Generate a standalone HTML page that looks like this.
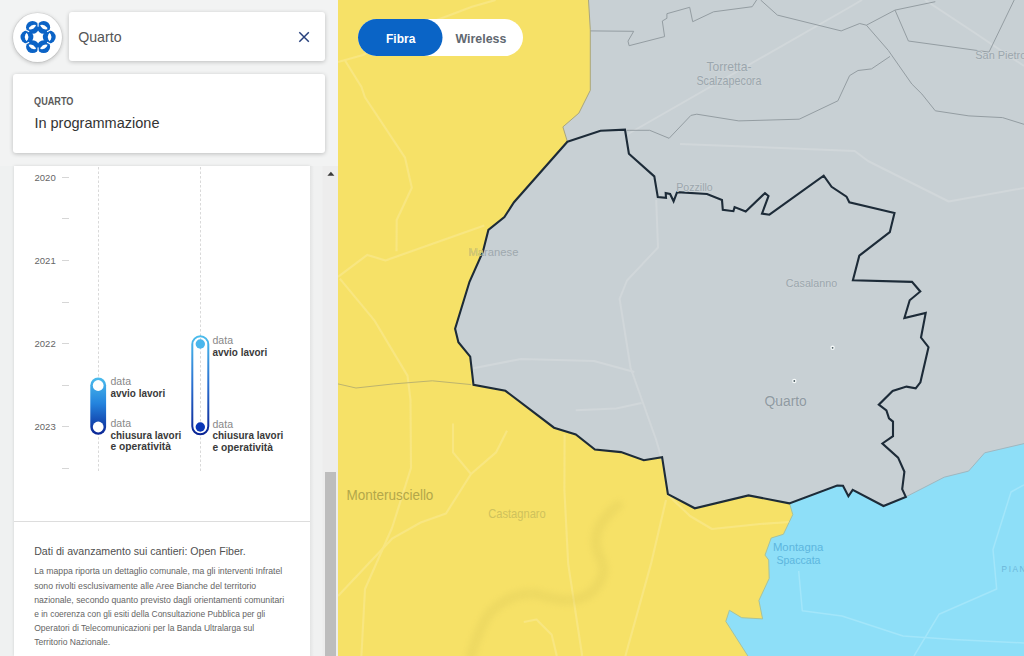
<!DOCTYPE html>
<html><head><meta charset="utf-8">
<style>
html,body{margin:0;padding:0;width:1024px;height:656px;overflow:hidden;background:#f1f3f3;font-family:"Liberation Sans",sans-serif;}
.abs{position:absolute;}
#side{left:0;top:0;width:338px;height:656px;background:#f2f3f3;}
#lower{left:0;top:166px;width:338px;height:490px;background:#eff1f1;}
#logo{left:13px;top:13px;width:49px;height:49px;border-radius:50%;background:#fff;box-shadow:0 0 0 0.6px rgba(0,0,0,.08),0 1px 4px rgba(0,0,0,.25);}
#search{left:69px;top:12px;width:256px;height:49px;background:#fff;border-radius:3px;box-shadow:0 1px 4px rgba(0,0,0,.22);}
#card{left:13px;top:74px;width:312px;height:79px;background:#fff;border-radius:3px;box-shadow:0 1px 4px rgba(0,0,0,.22);}
#panel{left:14px;top:166px;width:296px;height:490px;background:#fff;box-shadow:0 0 3px rgba(0,0,0,.13);}
#track{left:310px;top:166px;width:28px;height:490px;background:linear-gradient(to right,#e3e4e4 0px,#f0f1f1 4px,#f0f1f1 12px,#ededed 13px,#ededed 28px);}
#thumb{left:325px;top:472px;width:11px;height:184px;background:#bdbdbd;}
#map{left:338px;top:0;width:686px;height:656px;overflow:hidden;background:#c8d0d4;}
svg{position:absolute;left:0;top:0;}
</style></head><body>
<div id="side" class="abs">
  <div id="logo" class="abs"></div>
  <div id="lower" class="abs"></div>
  <div id="search" class="abs"></div>
  <div id="card" class="abs"></div>
  <div id="panel" class="abs"></div>
  <div id="track" class="abs"></div>
  <div id="thumb" class="abs"></div>

<svg width="338" height="656" viewBox="0 0 338 656" style="position:absolute;left:0;top:0">
  <defs>
    <linearGradient id="g1" x1="0" y1="0" x2="0" y2="1">
      <stop offset="0" stop-color="#4bbcec"/>
      <stop offset="0.45" stop-color="#2484de"/>
      <stop offset="1" stop-color="#0a2494"/>
    </linearGradient>
    <linearGradient id="g2" x1="0" y1="0" x2="0" y2="1">
      <stop offset="0" stop-color="#4bbcec"/>
      <stop offset="0.5" stop-color="#2a6fd0"/>
      <stop offset="1" stop-color="#0a2494"/>
    </linearGradient>
  </defs>
  <!-- logo -->
  <g><circle cx="49.25" cy="37.00" r="6.45" fill="#0b63c6"/><circle cx="43.68" cy="46.66" r="6.45" fill="#0b63c6"/><circle cx="32.53" cy="46.66" r="6.45" fill="#0b63c6"/><circle cx="26.95" cy="37.00" r="6.45" fill="#0b63c6"/><circle cx="32.52" cy="27.34" r="6.45" fill="#0b63c6"/><circle cx="43.68" cy="27.34" r="6.45" fill="#0b63c6"/><path fill="#fff" d="M51.50,37.00 L50.80,39.60 L49.60,41.30 L48.40,39.60 L47.70,37.00 L48.40,34.40 L49.60,32.70 L50.80,34.40Z"/><path fill="#fff" d="M44.80,48.60 L42.20,49.30 L40.13,49.11 L41.00,47.22 L42.90,45.31 L45.50,44.62 L47.57,44.81 L46.70,46.70Z"/><path fill="#fff" d="M31.40,48.60 L29.50,46.70 L28.63,44.81 L30.70,44.62 L33.30,45.31 L35.20,47.22 L36.07,49.11 L34.00,49.30Z"/><path fill="#fff" d="M24.70,37.00 L25.40,34.40 L26.60,32.70 L27.80,34.40 L28.50,37.00 L27.80,39.60 L26.60,41.30 L25.40,39.60Z"/><path fill="#fff" d="M31.40,25.40 L34.00,24.70 L36.07,24.89 L35.20,26.78 L33.30,28.69 L30.70,29.38 L28.63,29.19 L29.50,27.30Z"/><path fill="#fff" d="M44.80,25.40 L46.70,27.30 L47.57,29.19 L45.50,29.38 L42.90,28.69 L41.00,26.78 L40.13,24.89 L42.20,24.70Z"/><path d="M47.45,42.40 L49.53,43.60" stroke="#fff" stroke-width="1.1" stroke-linecap="round"/><path d="M38.10,47.80 L38.10,50.20" stroke="#fff" stroke-width="1.1" stroke-linecap="round"/><path d="M28.75,42.40 L26.67,43.60" stroke="#fff" stroke-width="1.1" stroke-linecap="round"/><path d="M28.75,31.60 L26.67,30.40" stroke="#fff" stroke-width="1.1" stroke-linecap="round"/><path d="M38.10,26.20 L38.10,23.80" stroke="#fff" stroke-width="1.1" stroke-linecap="round"/><path d="M47.45,31.60 L49.53,30.40" stroke="#fff" stroke-width="1.1" stroke-linecap="round"/></g>
  <!-- close X -->
  <path d="M299.3,32.3 L308.8,41.8 M308.8,32.3 L299.3,41.8" stroke="#27407c" stroke-width="1.5" fill="none"/>
  <g font-family="Liberation Sans" >
    <text x="78.2" y="42" font-size="14.8" fill="#555" textLength="43.4" lengthAdjust="spacingAndGlyphs">Quarto</text>
    <text x="34.1" y="105" font-size="11.5" font-weight="700" fill="#5a5a5a" textLength="39.3" lengthAdjust="spacingAndGlyphs">QUARTO</text>
    <text x="34.4" y="127.5" font-size="14.6" fill="#333" textLength="125.1" lengthAdjust="spacingAndGlyphs">In programmazione</text>
  </g>
  <!-- ticks -->
  <g stroke="#d6d6d6" stroke-width="1">
    <path d="M62,177.5 H69 M62,218.5 H69 M62,260.5 H69 M62,302.5 H69 M62,343.5 H69 M62,385.5 H69 M62,426.5 H69 M62,468.5 H69"/>
  </g>
  <g stroke="#d9d9d9" stroke-width="1" stroke-dasharray="2.5,2">
    <path d="M98.5,167 V471 M200.5,167 V471"/>
  </g>
  <g font-family="Liberation Sans" font-size="9" fill="#666">
    <text x="34.5" y="180.8" textLength="21.2" lengthAdjust="spacingAndGlyphs">2020</text>
    <text x="34.5" y="264" textLength="21.2" lengthAdjust="spacingAndGlyphs">2021</text>
    <text x="34.5" y="347.2" textLength="21.2" lengthAdjust="spacingAndGlyphs">2022</text>
    <text x="34.5" y="430.4" textLength="21.2" lengthAdjust="spacingAndGlyphs">2023</text>
  </g>
  <!-- pill 1 -->
  <rect x="90.3" y="377.4" width="15.8" height="57.4" rx="7.9" fill="url(#g1)"/>
  <circle cx="98.2" cy="385.5" r="5.4" fill="#fff"/>
  <circle cx="98.2" cy="427" r="5.4" fill="#fff"/>
  <!-- pill 2 -->
  <rect x="192.3" y="336.3" width="16" height="98" rx="8" fill="none" stroke="url(#g2)" stroke-width="2"/>
  <circle cx="200.3" cy="344" r="4.7" fill="#49b6ec"/>
  <circle cx="200.3" cy="427" r="4.7" fill="#0a36b6"/>
  <g font-family="Liberation Sans" font-size="10.3">
    <text x="110.5" y="385.3" fill="#888" textLength="20.5" lengthAdjust="spacingAndGlyphs">data</text>
    <text x="110.5" y="397" fill="#3a3a3a" font-weight="700" textLength="54.7" lengthAdjust="spacingAndGlyphs">avvio lavori</text>
    <text x="110.5" y="427.3" fill="#888" textLength="20.5" lengthAdjust="spacingAndGlyphs">data</text>
    <text x="110.5" y="439.3" fill="#3a3a3a" font-weight="700" textLength="70.8" lengthAdjust="spacingAndGlyphs">chiusura lavori</text>
    <text x="110.5" y="450.4" fill="#3a3a3a" font-weight="700" textLength="60.4" lengthAdjust="spacingAndGlyphs">e operatività</text>
    <text x="212.5" y="344" fill="#888" textLength="20.5" lengthAdjust="spacingAndGlyphs">data</text>
    <text x="212.5" y="355.5" fill="#3a3a3a" font-weight="700" textLength="54.7" lengthAdjust="spacingAndGlyphs">avvio lavori</text>
    <text x="212.5" y="428" fill="#888" textLength="20.5" lengthAdjust="spacingAndGlyphs">data</text>
    <text x="212.5" y="439.3" fill="#3a3a3a" font-weight="700" textLength="70.8" lengthAdjust="spacingAndGlyphs">chiusura lavori</text>
    <text x="212.5" y="450.6" fill="#3a3a3a" font-weight="700" textLength="60.4" lengthAdjust="spacingAndGlyphs">e operatività</text>
  </g>
  <line x1="14" y1="521.5" x2="310" y2="521.5" stroke="#dddddd" stroke-width="1"/>
  <g font-family="Liberation Sans">
    <text x="34.2" y="555.3" font-size="11" fill="#505050" textLength="211.5" lengthAdjust="spacingAndGlyphs">Dati di avanzamento sui cantieri: Open Fiber.</text>
    <g font-size="8.8" fill="#646464">
    <text x="34.2" y="574.3" textLength="248" lengthAdjust="spacingAndGlyphs">La mappa riporta un dettaglio comunale, ma gli interventi Infratel</text>
    <text x="34.2" y="588.5" textLength="222" lengthAdjust="spacingAndGlyphs">sono rivolti esclusivamente alle Aree Bianche del territorio</text>
    <text x="34.2" y="602.7" textLength="250" lengthAdjust="spacingAndGlyphs">nazionale, secondo quanto previsto dagli orientamenti comunitari</text>
    <text x="34.2" y="617.1" textLength="231" lengthAdjust="spacingAndGlyphs">e in coerenza con gli esiti della Consultazione Pubblica per gli</text>
    <text x="34.2" y="631" textLength="220" lengthAdjust="spacingAndGlyphs">Operatori di Telecomunicazioni per la Banda Ultralarga sul</text>
    <text x="34.2" y="645.3" textLength="76" lengthAdjust="spacingAndGlyphs">Territorio Nazionale.</text>
    </g>
  </g>
  <!-- scroll arrow -->
  <path d="M327.4,175.8 L334.4,175.8 L330.9,171.8 Z" fill="#3a3a3a"/>
</svg>
</div>
<div id="map" class="abs">
<svg width="686" height="656" viewBox="338 0 686 656">
  <defs><clipPath id="yclip"><path d="M338,0 L588.5,0 L590.3,29.7 L590.3,90.3 L578.9,113.1 L562.9,126.9 L567.4,141.7 L514,202.2 L504.4,217.1 L488.4,229.9 L482.9,251.7 L469.5,281.8 L455.1,328.8 L458.4,342.2 L470.2,356.6 L473.5,384.8 L505.4,390.8 L554,427.7 L575.8,434.4 L594.9,449.5 L621,452.1 L643.8,460.2 L662.1,457.2 L667.9,494.1 L694.8,508.3 L748.5,495.4 L789.5,503.2 L792.8,514.6 L783.4,534.3 L771.2,538 L765,555.1 L768.7,560 L769.2,578.4 L758.9,600.5 L762.6,618.9 L741.7,617.7 L729.4,610.3 L725.8,621.4 L747.9,656 L338,656 Z"/></clipPath><filter id="blur3" x="-20%" y="-20%" width="140%" height="140%"><feGaussianBlur stdDeviation="3"/></filter></defs>
  <rect x="338" y="0" width="686" height="656" fill="#c8d0d4"/>
  <!-- yellow -->
  <path fill="#f6e167" d="M338,0 L588.5,0 L590.3,29.7 L590.3,90.3 L578.9,113.1 L562.9,126.9 L567.4,141.7 L514,202.2 L504.4,217.1 L488.4,229.9 L482.9,251.7 L469.5,281.8 L455.1,328.8 L458.4,342.2 L470.2,356.6 L473.5,384.8 L505.4,390.8 L554,427.7 L575.8,434.4 L594.9,449.5 L621,452.1 L643.8,460.2 L662.1,457.2 L667.9,494.1 L694.8,508.3 L748.5,495.4 L789.5,503.2 L792.8,514.6 L783.4,534.3 L771.2,538 L765,555.1 L768.7,560 L769.2,578.4 L758.9,600.5 L762.6,618.9 L741.7,617.7 L729.4,610.3 L725.8,621.4 L747.9,656 L338,656 Z"/>
  <!-- blue -->
  <path fill="#8edff8" d="M789.5,503.2 L837.2,485.5 L843,485.8 L848.4,496.3 L852.7,489.8 L883.5,506 L905.8,496.9 L944.2,477.2 L968.6,471.1 L984.7,452.8 L1024,443.6 L1024,656 L747.9,656 L725.8,621.4 L729.4,610.3 L741.7,617.7 L762.6,618.9 L758.9,600.5 L769.2,578.4 L768.7,560 L765,555.1 L771.2,538 L783.4,534.3 L792.8,514.6 Z"/>

  <!-- roads yellow -->
  <g fill="none" stroke="#f9e98c" stroke-width="2.1" stroke-linejoin="round" opacity="0.7">
    <path d="M338,62 L363,55 L405,32 L472,6.7 L495.6,0"/>
    <path d="M344.7,60 L361.5,87 L364.8,97 L405,157.6 L411.8,187.8 L396.7,220 L396.5,251.2"/>
    <path d="M338,276.8 L367.3,254.9 L385.5,260.4 L484.3,225.6"/>
    <path d="M339.8,278.6 L374.6,320.7 L407.5,375.6 L410.5,400 L411,468 L392,528 L365,589 L361.4,656"/>
    <path d="M453,423.6 L453,452.4 L471,474 L496,452.4 L507,430.8"/>
    <path d="M471,474 L446,513.5 L420.7,522.5 L392,538.7 L338,596"/>
    <path d="M564.6,434.4 L564.4,490 L568.2,563.9 L582.2,656"/>
    <path d="M666,500 L651,563.9 L625.4,656"/>
    <path d="M667,494 L690,516 L712,529 L760,524 L790,522"/>
    <path d="M523.8,622 L536.5,619.5 L551.7,634.7 L556.8,656"/>
      </g>
  <!-- terrain shade -->
  <g fill="none" stroke="#dcc958" stroke-linecap="round" stroke-linejoin="round" opacity="0.32" filter="url(#blur3)">
    <path d="M617.8,505.2 C600,520 592,535 597.4,551 C600,560 612,570 592.4,591.6 C580,602 565,603 536.5,594.1 C520,592 505,598 490.8,611.9 C482,622 476,640 470.5,656" stroke-width="10"/>
  </g>
  <!-- roads gray -->
  <g fill="none" stroke="#d1d7da" stroke-width="2" stroke-linejoin="round">
    <path d="M656.2,200 L658,247.5 L627,280.5 L619.6,298.8 L630.6,368 L656.2,440 L662,460"/>
    <path d="M473.3,368.2 L521,359 L594,361 L634.3,372"/>
    <path d="M575.7,410.3 L616,408.5 L641.6,403"/>
    <path d="M628,134 L850,7 L862,0"/>
    <path d="M925,0 L975,33 L1024,66"/>
    <path d="M680,144 L854.7,151 L868,161 L948.7,201.5 L1024,188"/>
      </g>
  <!-- roads blue -->
  <g fill="none" stroke="#a3e6fa" stroke-width="1.5" stroke-linejoin="round">
    <path d="M798.7,571 L802.3,610.7 L842,616 L903,636 L953.5,639.5 L1024,643"/>
    <path d="M914,656 L939,614.3 L996.7,589 L993,549.5 L1011,492 L1024,484.8"/>
  </g>
  <!-- thin boundaries -->
  <g fill="none" stroke="#949da2" stroke-width="1">
    <path d="M590.3,30.9 L633.7,31.3 L628,41.1 L629.1,45.7 L664.6,36.6 L662.3,21 L666.9,18.3 L666.9,13.7 L689.7,7.3 L692.7,21.7 L713.6,11.8 L752.2,6.7 L756.6,0"/>
    <path d="M760.6,0 L777.4,15.1 L841.2,30.9 L859.7,23.5 L866.4,25.2 L895,10.1 L935.3,1.7"/>
    <path d="M866.4,25.2 L888.3,50.4 L911.8,84 L921.9,94 L935.3,110.8 L968.9,115.9 L1002.5,117.6 L1024,124.3"/>
    <path d="M895,10.1 L908.4,41 L989,52.1 L1014.2,0"/>
    <path d="M890,56.4 L871.5,68.9 L858,70.5 L849.6,75.6 L837.9,100.8 L799.2,119.2 L738.8,120.9 L696.8,114.2 L690.9,115.4 L669.1,138.3 L649.7,130.3 L626.9,130.3"/>
  </g>
  <path d="M338,383.9 L356,388 L393.5,383.9 L432.3,380.8 L471.2,384.6" fill="none" stroke="#bdb46e" stroke-width="1"/>
  <g fill="none" stroke-width="1" stroke-linejoin="round">
    <path stroke="#a9a67e" d="M588.5,0 L590.3,29.7 L590.3,90.3 L578.9,113.1 L562.9,126.9 L567.4,141.7"/>
    <path stroke="#9fb7c0" d="M905.8,496.9 L944.2,477.2 L968.6,471.1 L984.7,452.8 L1024,443.6"/>
    <path stroke="#a8c39a" d="M789.5,503.2 L792.8,514.6 L783.4,534.3 L771.2,538 L765,555.1 L768.7,560 L769.2,578.4 L758.9,600.5 L762.6,618.9 L741.7,617.7 L729.4,610.3 L725.8,621.4 L747.9,656"/>
  </g>
  <!-- Quarto boundary -->
  <path fill="none" stroke="#1d2b38" stroke-width="2.1" stroke-linejoin="miter" d="M567.4,141.7 L600.5,130.7 L625,129.6 L628.9,153.7 L654.3,176.4 L657.8,197.1 L666,197.8 L665.7,193.1 L670.1,194 L673.6,201.3 L677.1,192.2 L707,194 L722,200.1 L722.8,209.8 L733.4,211.2 L734.6,207.1 L745.7,211.5 L765,193.1 L768.5,196 L762,213.6 L769.4,214.7 L823.7,175.7 L831.6,186.8 L846.5,196.6 L849.3,202.3 L894.5,213 L889.8,232.2 L859.3,255.7 L852.9,280.2 L912,281.9 L920.3,291.5 L909.7,300.3 L904.4,318 L925.7,313 L921,337.6 L928.5,347.2 L920.4,382.3 L915.7,388.3 L906.5,386.6 L892.6,390.9 L878.8,404.7 L886.4,410.4 L889,418.3 L893,421.6 L893,436.2 L882.4,443.5 L898.1,457.6 L904.4,471.7 L902.2,489.2 L905.8,496.9 L883.5,506 L852.7,489.8 L848.4,496.3 L843,485.8 L837.2,485.5 L789.3,503.4 L748.5,495.4 L694.8,508.3 L667.9,494.1 L662.1,457.2 L643.8,460.2 L621,452.1 L594.9,449.5 L575.8,434.4 L554,427.7 L505.4,390.8 L473.5,384.8 L470.2,356.6 L458.4,342.2 L455.1,328.8 L469.5,281.8 L482.9,251.7 L488.4,229.9 L504.4,217.1 L514,202.2 Z"/>

  <!-- dots -->
  <g><circle cx="832.6" cy="347.8" r="2.2" fill="#f4f8f8"/><circle cx="832.6" cy="347.8" r="0.9" fill="#4a5a60"/>
  <circle cx="794.3" cy="381" r="2.2" fill="#f4f8f8"/><circle cx="794.3" cy="381" r="0.9" fill="#4a5a60"/>
  <circle cx="776" cy="401.5" r="2.2" fill="#f4f8f8"/><circle cx="776" cy="401.5" r="0.9" fill="#4a5a60"/></g>
  <!-- labels -->
  <g font-family="Liberation Sans" lengthAdjust="spacingAndGlyphs">
    <g fill="#9ba6ad" stroke="#cdd4d7" stroke-width="1.5" paint-order="stroke">
      <text x="706.4" y="71.1" font-size="12.2" textLength="45.1" lengthAdjust="spacingAndGlyphs">Torretta-</text>
      <text x="696.4" y="84.6" font-size="12.2" textLength="65" lengthAdjust="spacingAndGlyphs">Scalzapecora</text>
      <text x="975.3" y="59.1" font-size="10" textLength="51" lengthAdjust="spacingAndGlyphs">San Pietro</text>
      <text x="676.2" y="191" font-size="11.5" textLength="36.6" lengthAdjust="spacingAndGlyphs">Pozzillo</text>
      <text x="785.8" y="286.7" font-size="11.8" textLength="51.3" lengthAdjust="spacingAndGlyphs">Casalanno</text>
      <text x="764.6" y="405.6" font-size="15.4" fill="#8f9aa2" textLength="42.2" lengthAdjust="spacingAndGlyphs">Quarto</text>
    </g>
    <text x="468.5" y="256.4" font-size="11.5" fill="#9ea8ae" textLength="49.9" lengthAdjust="spacingAndGlyphs">Maranese</text>
    <text x="468.5" y="256.4" font-size="11.5" fill="#dccd5e" clip-path="url(#yclip)" textLength="49.9" lengthAdjust="spacingAndGlyphs">Maranese</text>
    <text x="346.4" y="500" font-size="14.2" fill="#b3a74a" textLength="87" lengthAdjust="spacingAndGlyphs">Monterusciello</text>
    <text x="488.2" y="518.2" font-size="12.8" fill="#cfc25c" textLength="57.6" lengthAdjust="spacingAndGlyphs">Castagnaro</text>
    <g fill="#5db6de">
      <text x="772.9" y="550.7" font-size="11.5" textLength="50.4" lengthAdjust="spacingAndGlyphs">Montagna</text>
      <text x="776.4" y="563.6" font-size="11.5" textLength="44.1" lengthAdjust="spacingAndGlyphs">Spaccata</text>
    </g>
    <text x="1001.6" y="571.5" font-size="8.2" fill="#6cb6d8" letter-spacing="1.6">PIANURA</text>
  </g>
  <!-- toggle -->
  <rect x="358" y="19" width="165" height="37" rx="18.5" fill="#fff"/>
  <rect x="358" y="19" width="84.5" height="37" rx="18.5" fill="#0a64c6"/>
  <g font-family="Liberation Sans" font-weight="700" font-size="13.4">
    <text x="386" y="42.5" fill="#fff" textLength="29.4" lengthAdjust="spacingAndGlyphs">Fibra</text>
    <text x="455.5" y="42.5" fill="#5f6870" textLength="50.9" lengthAdjust="spacingAndGlyphs">Wireless</text>
  </g>
</svg>
</div>
</body></html>
